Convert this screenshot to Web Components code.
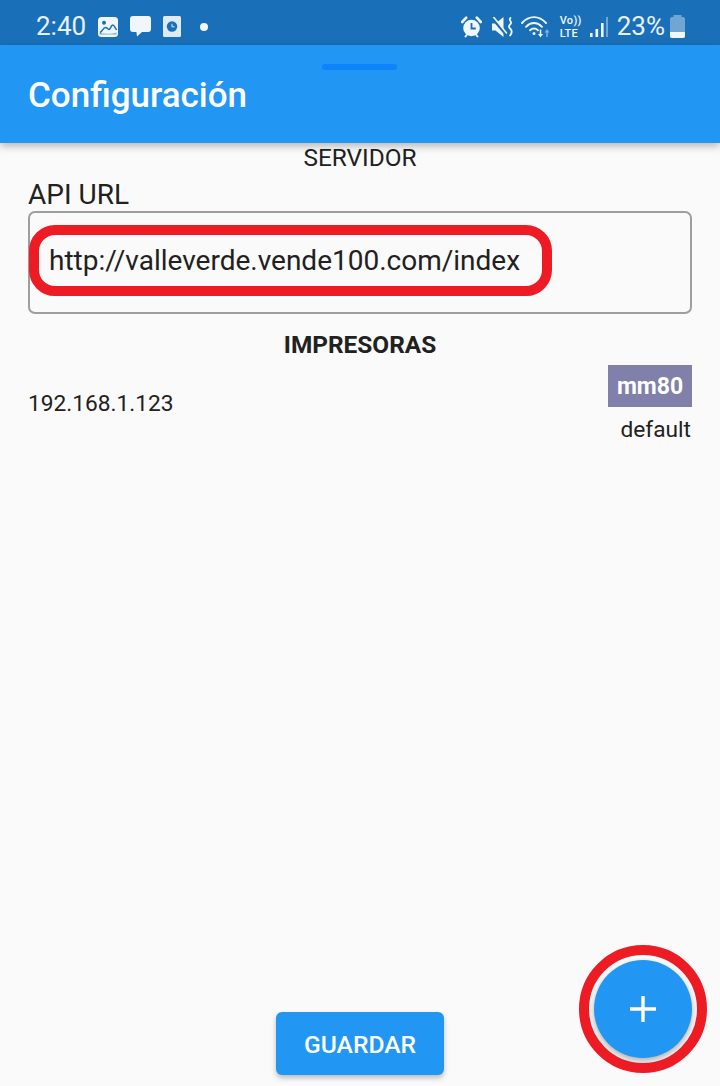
<!DOCTYPE html>
<html lang="es">
<head>
<meta charset="utf-8">
<title>Configuración</title>
<style>
  html, body { margin: 0; height: 100%; background: #fafafa; font-family: Roboto, "Liberation Sans", sans-serif; color: #212121; }
  body { overflow: hidden; }
</style>
</head>
<body>
<config-screen>
  <status-bar slot="status"></status-bar>
  <app-bar slot="bar">Configuración</app-bar>
  <section-title>SERVIDOR</section-title>
  <url-field label="API URL" value="http://valleverde.vende100.com/index"></url-field>
  <section-title strong>IMPRESORAS</section-title>
  <printer-row ip="192.168.1.123" size="mm80" note="default"></printer-row>
  <save-button slot="footer">GUARDAR</save-button>
  <add-fab slot="fab"></add-fab>
</config-screen>

<script>
class ConfigScreen extends HTMLElement {
  constructor() {
    super();
    this.attachShadow({ mode: 'open' });
  }
  connectedCallback() {
    this.shadowRoot.innerHTML = `
      <style>
        :host { display: flex; flex-direction: column; height: 1086px; position: relative; }
        main { flex: 1; display: flex; flex-direction: column; padding: 0 28px; min-height: 0; }
        footer { display: flex; justify-content: center; padding-bottom: 11px; }
      </style>
      <slot name="status"></slot>
      <slot name="bar"></slot>
      <main><slot></slot></main>
      <footer><slot name="footer"></slot></footer>
      <slot name="fab"></slot>
    `;
  }
}

class StatusBar extends HTMLElement {
  constructor() {
    super();
    this.attachShadow({ mode: 'open' });
  }
  connectedCallback() {
    this.shadowRoot.innerHTML = `
      <style>
        :host { display: flex; align-items: center; height: 45px; background: #1a70b8; color: #e9f2fa; font-size: 26px; box-sizing: border-box; padding: 8px 35px 0 36px; }
        .left, .right { display: flex; align-items: center; }
        .right { margin-left: auto; }
        svg { display: block; flex: none; }
        .time { margin-right: 12px; line-height: 30px; margin-top: -1px; }
        .pct { margin: -1px 5px 0 9px; line-height: 30px; }
        .volte { width: 24px; margin-right: 6px; font-size: 11px; line-height: 13px; font-weight: 500; letter-spacing: .3px; color: #f1f6fb; }
        .volte div { white-space: nowrap; }
      </style>
      <div class="left">
        <span class="time">2:40</span>
        <!-- imagen -->
        <svg width="20" height="20" viewBox="0 0 20 20" style="margin-right:12px">
          <rect width="20" height="20" rx="3.5" fill="#f1f6fb"/>
          <circle cx="6" cy="5.800" r="2" fill="#1a70b8"/>
          <path d="M2 15.500c2.500-1 3-5 5.500-5 2 0 2 2 3.500 2s2-4.500 3.700-4.500 2.300 3 4 5" stroke="#1a70b8" stroke-width="1.500" fill="none"/>
          <path d="M1.500 15.800c3 1.200 14 1.200 17-.4v2.200H1.500z" fill="#1a70b8" opacity=".55"/>
        </svg>
        <!-- mensaje -->
        <svg width="21" height="21" viewBox="0 0 21 21" style="margin-right:12px">
          <path d="M3 0h15a3 3 0 0 1 3 3v10a3 3 0 0 1-3 3H12l-5 4.500-.6-4.500H3a3 3 0 0 1-3-3V3a3 3 0 0 1 3-3z" fill="#f1f6fb"/>
        </svg>
        <!-- app reloj -->
        <svg width="18" height="21" viewBox="0 0 18 21" style="margin-right:19px">
          <rect width="18" height="21" rx="1.500" fill="#dfeaf5"/>
          <circle cx="9" cy="10.500" r="5.200" fill="#1a70b8"/>
          <path d="M9 7.800v3h2.600" stroke="#dfeaf5" stroke-width="1" fill="none"/>
        </svg>
        <svg width="8" height="8" viewBox="0 0 8 8"><circle cx="4" cy="4" r="4" fill="#f1f6fb"/></svg>
      </div>
      <div class="right">
        <!-- alarma -->
        <svg width="21" height="22" viewBox="0 0 21 22" style="margin-right:10px">
          <circle cx="10.500" cy="12" r="8.300" fill="#f1f6fb"/>
          <path d="M1.200 6l4-4.300M19.800 6l-4-4.300" stroke="#f1f6fb" stroke-width="2.600" stroke-linecap="round"/>
          <path d="M4.500 20.500l1.500-2M16.500 20.500l-1.500-2" stroke="#f1f6fb" stroke-width="2" stroke-linecap="round"/>
          <path d="M10.500 7v5.500h4.300" stroke="#1a70b8" stroke-width="1.800" fill="none"/>
        </svg>
        <!-- vibrar sin sonido -->
        <svg width="21" height="20" viewBox="0 0 21 20" style="margin-right:8px">
          <path d="M0 6.500h3.500L11.500 0v20L3.500 13.500H0z" fill="#f1f6fb"/>
          <path d="M0 0.500l13.500 16" stroke="#1a70b8" stroke-width="3.200"/>
          <path d="M1.500 0l13 16" stroke="#f1f6fb" stroke-width="1.600" stroke-linecap="round"/>
          <path d="M18.500 1c-2.800 2 2.400 3.700 0 6-2.200 2-2 3 0 5s1.800 3.600-.4 6.500" stroke="#f1f6fb" stroke-width="1.800" fill="none" stroke-linecap="round"/>
        </svg>
        <!-- wifi -->
        <svg width="30" height="22" viewBox="0 0 30 22" style="margin-right:9px">
          <path d="M1 7C8-.8 18-.8 25 7" stroke="#f1f6fb" stroke-width="1.900" fill="none" stroke-linecap="round"/>
          <path d="M5 10.800c5-5 11-5 16 0" stroke="#f1f6fb" stroke-width="1.900" fill="none" stroke-linecap="round"/>
          <path d="M9 14.200c3-2.500 5-2.500 8 0" stroke="#f1f6fb" stroke-width="1.900" fill="none" stroke-linecap="round"/>
          <circle cx="13" cy="17.500" r="1.500" fill="#f1f6fb"/>
          <path d="M19.500 13.500v5" stroke="#f1f6fb" stroke-width="1.500"/>
          <path d="M17 18h5l-2.500 3.500z" fill="#f1f6fb"/>
          <path d="M26 21v-5" stroke="#7fb0da" stroke-width="1.500"/>
          <path d="M23.500 16.500h5L26 13z" fill="#7fb0da"/>
        </svg>
        <div class="volte"><div>Vo))</div><div>LTE</div></div>
        <!-- señal -->
        <svg width="18" height="20" viewBox="0 0 18 20">
          <rect x="0" y="16" width="2.600" height="4" fill="#f1f6fb"/>
          <rect x="5.500" y="12" width="2.600" height="8" fill="#f1f6fb"/>
          <rect x="11" y="6" width="2.600" height="14" fill="#f1f6fb"/>
          <rect x="16" y="0" width="2" height="20" fill="#6fa6d4"/>
        </svg>
        <span class="pct">23%</span>
        <!-- bateria -->
        <svg width="15" height="23" viewBox="0 0 15 23">
          <path d="M3.500 0h8v2H13a2 2 0 0 1 2 2V21a2 2 0 0 1-2 2H2a2 2 0 0 1-2-2V4a2 2 0 0 1 2-2h1.500z" fill="#6fa6d4"/>
          <path d="M0 17h15v4a2 2 0 0 1-2 2H2a2 2 0 0 1-2-2z" fill="#f1f6fb"/>
        </svg>
      </div>
    `;
  }
}

class AppBar extends HTMLElement {
  constructor() {
    super();
    this.attachShadow({ mode: 'open' });
  }
  connectedCallback() {
    this.shadowRoot.innerHTML = `
      <style>
        :host { display: flex; align-items: center; height: 98px; padding: 2px 28px 0; background: #2196f3; color: #fff; box-sizing: border-box; position: relative; box-shadow: 0 3px 8px rgba(0,0,0,.28); z-index: 1; font-size: 35px; font-weight: 500; }
        .handle { position: absolute; left: 322px; top: 19px; width: 75px; height: 6px; border-radius: 3px; background: #0d84fa; }
      </style>
      <div class="handle"></div>
      <slot></slot>
    `;
  }
}

class SectionTitle extends HTMLElement {
  constructor() {
    super();
    this.attachShadow({ mode: 'open' });
  }
  connectedCallback() {
    this.shadowRoot.innerHTML = `
      <style>
        :host { display: block; text-align: center; font-size: 24.400px; line-height: 30px; color: #212121; }
        :host([strong]) { font-weight: 700; margin-top: 16px; }
      </style>
      <slot></slot>
    `;
  }
}

class UrlField extends HTMLElement {
  constructor() {
    super();
    this.attachShadow({ mode: 'open' });
  }
  connectedCallback() {
    this.shadowRoot.innerHTML = `
      <style>
        :host { display: block; margin-top: 6px; }
        .label { font-size: 28px; line-height: 32px; color: #212121; }
        .box { height: 103px; box-sizing: border-box; border: 2px solid #9e9e9e; border-radius: 7px; padding: 26px 0 0 19px; font-size: 28px; line-height: 44px; color: #212121; position: relative; }
        .mark { position: absolute; left: -1px; top: 12px; width: 523px; height: 71px; box-sizing: border-box; border: 10px solid #ed1c24; border-radius: 26px; }
      </style>
      <div class="label"></div>
      <div class="box"><span class="value"></span><div class="mark"></div></div>
    `;
    this.shadowRoot.querySelector('.label').textContent = this.getAttribute('label');
    this.shadowRoot.querySelector('.value').textContent = this.getAttribute('value');
  }
}

class PrinterRow extends HTMLElement {
  constructor() {
    super();
    this.attachShadow({ mode: 'open' });
  }
  connectedCallback() {
    this.shadowRoot.innerHTML = `
      <style>
        :host { display: flex; align-items: center; justify-content: space-between; margin-top: 5px; font-size: 22.700px; color: #212121; }
        .ip { margin-bottom: 4px; }
        .right { display: flex; flex-direction: column; align-items: flex-end; }
        .tag { width: 84px; height: 42px; display: flex; align-items: center; justify-content: center; background: #8080aa; color: #fff; font-weight: 700; font-size: 23px; }
        .note { line-height: 30px; margin-top: 8px; margin-right: 1px; }
      </style>
      <span class="ip"></span>
      <div class="right"><div class="tag"></div><div class="note"></div></div>
    `;
    this.shadowRoot.querySelector('.ip').textContent = this.getAttribute('ip');
    this.shadowRoot.querySelector('.tag').textContent = this.getAttribute('size');
    this.shadowRoot.querySelector('.note').textContent = this.getAttribute('note');
  }
}

class SaveButton extends HTMLElement {
  constructor() {
    super();
    this.attachShadow({ mode: 'open' });
  }
  connectedCallback() {
    this.shadowRoot.innerHTML = `
      <style>
        :host { display: flex; align-items: center; justify-content: center; width: 168px; height: 63px; padding-top: 1px; box-sizing: border-box; border-radius: 6px; background: #2196f3; color: #fff; font-size: 24.600px; font-weight: 500; box-shadow: 0 3px 5px rgba(0,0,0,.25); }
      </style>
      <slot></slot>
    `;
  }
}

class AddFab extends HTMLElement {
  constructor() {
    super();
    this.attachShadow({ mode: 'open' });
  }
  connectedCallback() {
    this.shadowRoot.innerHTML = `
      <style>
        :host { display: flex; align-items: center; justify-content: center; position: absolute; left: 594px; top: 960px; width: 98px; height: 98px; border-radius: 50%; background: #2196f3; box-shadow: 0 3px 6px rgba(0,0,0,.3); }
        .mark { position: absolute; left: -15px; top: -15px; width: 128px; height: 128px; box-sizing: border-box; border: 10px solid #ed1c24; border-radius: 50%; }
        svg { display: block; }
      </style>
      <svg width="26" height="26" viewBox="0 0 26 26"><path d="M13 0v26M0 13h26" stroke="#fff" stroke-width="3.400"/></svg>
      <div class="mark"></div>
    `;
  }
}

customElements.define('config-screen', ConfigScreen);
customElements.define('status-bar', StatusBar);
customElements.define('app-bar', AppBar);
customElements.define('section-title', SectionTitle);
customElements.define('url-field', UrlField);
customElements.define('printer-row', PrinterRow);
customElements.define('save-button', SaveButton);
customElements.define('add-fab', AddFab);
</script>
</body>
</html>
